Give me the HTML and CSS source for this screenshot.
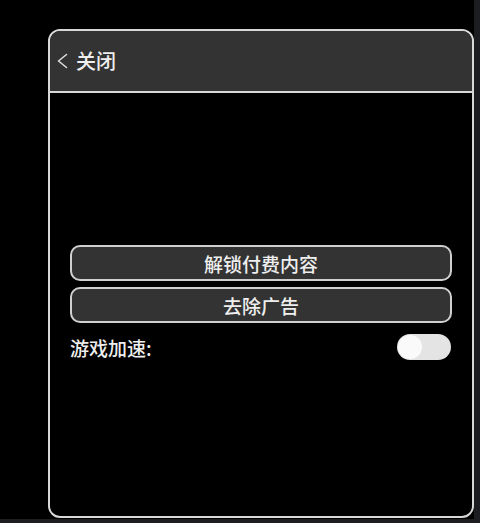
FILE: index.html
```html
<!DOCTYPE html>
<html lang="zh">
<head>
<meta charset="utf-8">
<link rel="stylesheet" href="styles.css">
</head>
<body>
<div class="screen">
  <div class="panel">
    <div class="header">
      <svg class="back" width="12" height="16" viewBox="0 0 12 16"><polyline points="10.5,1.5 2.5,8 10.5,14.5" fill="none" stroke="#dcdcdc" stroke-width="1.6" stroke-linecap="round" stroke-linejoin="round"/></svg>
      <span class="title">关闭</span>
    </div>
    <div class="content">
      <div class="btn">解锁付费内容</div>
      <div class="btn">去除广告</div>
      <div class="row">
        <span class="label">游戏加速:</span>
        <div class="toggle"><div class="knob"></div></div>
      </div>
    </div>
  </div>
</div>
</body>
</html>
```
FILE: styles.css
```css
html, body {
  margin: 0;
  padding: 0;
}
body {
  width: 480px;
  height: 523px;
  background: #1b1d21;
  font-family: "Noto Sans CJK SC", "Noto Sans", sans-serif;
  font-weight: 500;
  color: #ececec;
  overflow: hidden;
}
.screen {
  width: 474px;
  height: 519px;
  background: #000;
  padding: 29px 0 0 48px;
  box-sizing: border-box;
}
.panel {
  width: 426px;
  height: 489px;
  box-sizing: border-box;
  border: 2px solid #d8d8d8;
  border-radius: 12px;
  overflow: hidden;
  display: flex;
  flex-direction: column;
}
.header {
  height: 60px;
  background: #333333;
  border-bottom: 2px solid #d8d8d8;
  display: flex;
  align-items: center;
  padding-left: 6px;
  gap: 8px;
}
.back {
  display: block;
}
.title {
  font-size: 20px;
  line-height: 1;
  color: #eeeeee;
}
.content {
  padding: 152px 20px 0 20px;
  display: flex;
  flex-direction: column;
  gap: 6px;
}
.btn {
  height: 36px;
  box-sizing: border-box;
  border: 2px solid #d0d0d0;
  border-radius: 10px;
  background: #333333;
  display: flex;
  align-items: center;
  justify-content: center;
  font-size: 19px;
  color: #eeeeee;
}
.row {
  margin-top: 5px;
  height: 26px;
  display: flex;
  align-items: center;
  justify-content: space-between;
  padding-right: 1px;
}
.label {
  font-size: 19px;
  color: #eeeeee;
}
.toggle {
  width: 54px;
  height: 26px;
  border-radius: 13px;
  background: #e4e4e4;
  display: flex;
  align-items: center;
  padding-left: 1px;
  box-sizing: border-box;
}
.knob {
  width: 24px;
  height: 24px;
  border-radius: 50%;
  background: #fafafa;
}
```
